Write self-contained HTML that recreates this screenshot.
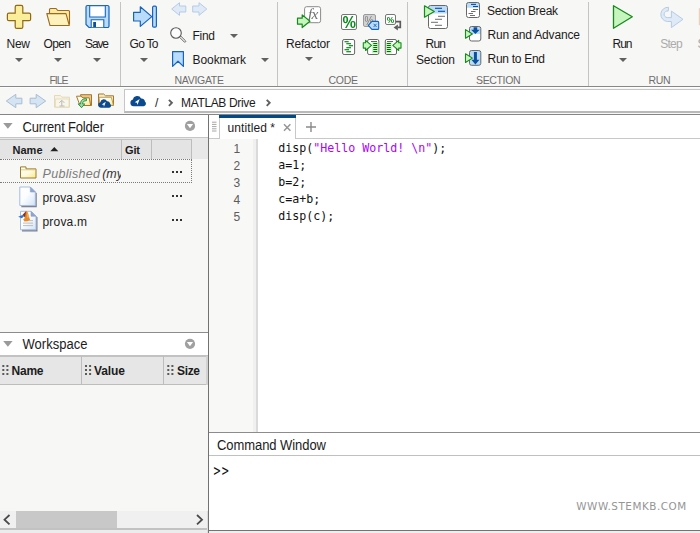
<!DOCTYPE html>
<html><head><meta charset="utf-8"><title>MATLAB</title>
<style>
html,body{margin:0;padding:0}
body{width:700px;height:533px;overflow:hidden;background:#fff;position:relative;font-family:"Liberation Sans",sans-serif}
.t{position:absolute;white-space:pre;}
svg{overflow:visible}
</style></head><body>
<div style="position:absolute;left:0px;top:0px;width:700px;height:86px;background:#f7f7f5;"></div>
<div style="position:absolute;left:0px;top:86px;width:700px;height:1px;background:#888888;"></div>
<div style="position:absolute;left:0px;top:87px;width:700px;height:27px;background:#f7f7f5;"></div>
<div style="position:absolute;left:0px;top:87px;width:700px;height:1px;background:#fdfdfd;"></div>
<div style="position:absolute;left:120px;top:2px;width:1px;height:84px;background:#c4c4c4;"></div>
<div style="position:absolute;left:277px;top:2px;width:1px;height:84px;background:#c4c4c4;"></div>
<div style="position:absolute;left:407px;top:2px;width:1px;height:84px;background:#c4c4c4;"></div>
<div style="position:absolute;left:588px;top:2px;width:1px;height:84px;background:#c4c4c4;"></div>
<div style="position:absolute;left:124px;top:89px;width:580px;height:24px;background:#fff;border:1px solid #c6c6c6;border-bottom:2px solid #b9b9b9;box-sizing:border-box;"></div>
<div style="position:absolute;left:0px;top:114px;width:700px;height:1px;background:#868686;"></div>
<span class="t" style="left:6.50px;top:35.64px;font:normal 12.00px/17px 'Liberation Sans',sans-serif;letter-spacing:-0.253px;color:#1c1c1c;">New</span>
<span class="t" style="left:43.50px;top:35.64px;font:normal 12.00px/17px 'Liberation Sans',sans-serif;letter-spacing:-0.619px;color:#1c1c1c;">Open</span>
<span class="t" style="left:85.00px;top:35.64px;font:normal 12.00px/17px 'Liberation Sans',sans-serif;letter-spacing:-1.117px;color:#1c1c1c;">Save</span>
<span class="t" style="left:49.50px;top:72.86px;font:normal 10.50px/15px 'Liberation Sans',sans-serif;letter-spacing:-1.058px;color:#6e6e6e;">FILE</span>
<span class="t" style="left:129.50px;top:35.64px;font:normal 12.00px/17px 'Liberation Sans',sans-serif;letter-spacing:-0.700px;color:#1c1c1c;">Go To</span>
<span class="t" style="left:192.50px;top:27.74px;font:normal 12.00px/17px 'Liberation Sans',sans-serif;letter-spacing:-0.282px;color:#1c1c1c;">Find</span>
<span class="t" style="left:192.50px;top:51.74px;font:normal 12.00px/17px 'Liberation Sans',sans-serif;letter-spacing:-0.074px;color:#1c1c1c;">Bookmark</span>
<span class="t" style="left:174.50px;top:72.86px;font:normal 10.50px/15px 'Liberation Sans',sans-serif;letter-spacing:-0.291px;color:#6e6e6e;">NAVIGATE</span>
<span class="t" style="left:286.00px;top:35.64px;font:normal 12.00px/17px 'Liberation Sans',sans-serif;letter-spacing:-0.193px;color:#1c1c1c;">Refactor</span>
<span class="t" style="left:328.50px;top:72.86px;font:normal 10.50px/15px 'Liberation Sans',sans-serif;letter-spacing:-0.279px;color:#6e6e6e;">CODE</span>
<span class="t" style="left:425.50px;top:35.64px;font:normal 12.00px/17px 'Liberation Sans',sans-serif;letter-spacing:-0.757px;color:#1c1c1c;">Run</span>
<span class="t" style="left:416.00px;top:51.74px;font:normal 12.00px/17px 'Liberation Sans',sans-serif;letter-spacing:-0.171px;color:#1c1c1c;">Section</span>
<span class="t" style="left:487.00px;top:2.74px;font:normal 12.00px/17px 'Liberation Sans',sans-serif;letter-spacing:-0.309px;color:#1c1c1c;">Section Break</span>
<span class="t" style="left:487.50px;top:26.84px;font:normal 12.00px/17px 'Liberation Sans',sans-serif;letter-spacing:-0.160px;color:#1c1c1c;">Run and Advance</span>
<span class="t" style="left:487.50px;top:50.74px;font:normal 12.00px/17px 'Liberation Sans',sans-serif;letter-spacing:-0.282px;color:#1c1c1c;">Run to End</span>
<span class="t" style="left:476.00px;top:72.86px;font:normal 10.50px/15px 'Liberation Sans',sans-serif;letter-spacing:-0.345px;color:#6e6e6e;">SECTION</span>
<span class="t" style="left:612.50px;top:35.64px;font:normal 12.00px/17px 'Liberation Sans',sans-serif;letter-spacing:-1.007px;color:#1c1c1c;">Run</span>
<span class="t" style="left:660.20px;top:35.64px;font:normal 12.00px/17px 'Liberation Sans',sans-serif;letter-spacing:-0.762px;color:#ababab;">Step</span>
<span class="t" style="left:697.50px;top:35.64px;font:normal 12.00px/17px 'Liberation Sans',sans-serif;color:#a6a6a6;">S</span>
<span class="t" style="left:648.50px;top:72.86px;font:normal 10.50px/15px 'Liberation Sans',sans-serif;letter-spacing:-0.374px;color:#6e6e6e;">RUN</span>
<svg style="position:absolute;left:15px;top:58px" width="8" height="4" viewBox="0 0 8 4"><path d="M0 0H8 L4 4 Z" fill="#616161"/></svg>
<svg style="position:absolute;left:54px;top:58px" width="8" height="4" viewBox="0 0 8 4"><path d="M0 0H8 L4 4 Z" fill="#616161"/></svg>
<svg style="position:absolute;left:93px;top:58px" width="8" height="4" viewBox="0 0 8 4"><path d="M0 0H8 L4 4 Z" fill="#616161"/></svg>
<svg style="position:absolute;left:140px;top:58px" width="8" height="4" viewBox="0 0 8 4"><path d="M0 0H8 L4 4 Z" fill="#616161"/></svg>
<svg style="position:absolute;left:230px;top:34px" width="8" height="4" viewBox="0 0 8 4"><path d="M0 0H8 L4 4 Z" fill="#616161"/></svg>
<svg style="position:absolute;left:261px;top:58px" width="8" height="4" viewBox="0 0 8 4"><path d="M0 0H8 L4 4 Z" fill="#616161"/></svg>
<svg style="position:absolute;left:305px;top:57px" width="8" height="4" viewBox="0 0 8 4"><path d="M0 0H8 L4 4 Z" fill="#616161"/></svg>
<svg style="position:absolute;left:619px;top:58px" width="8" height="4" viewBox="0 0 8 4"><path d="M0 0H8 L4 4 Z" fill="#616161"/></svg>
<span class="t" style="left:155.00px;top:94.74px;font:normal 12.00px/17px 'Liberation Sans',sans-serif;color:#1c1c1c;">/</span>
<span class="t" style="left:181.00px;top:94.74px;font:normal 12.00px/17px 'Liberation Sans',sans-serif;letter-spacing:-0.351px;color:#1c1c1c;">MATLAB Drive</span>
<div style="position:absolute;left:0px;top:115px;width:208px;height:418px;background:#f7f7f5;"></div>
<div style="position:absolute;left:0px;top:115px;width:208px;height:22px;background:#fff;"></div>
<div style="position:absolute;left:0px;top:137px;width:208px;height:1px;background:#c6c6c6;"></div>
<div style="position:absolute;left:0px;top:138px;width:208px;height:21px;background:#e8e8e8;"></div>
<div style="position:absolute;left:0px;top:139px;width:192px;height:20px;background:#e4e4e4;border-top:1px solid #c2c2c2;box-sizing:border-box;"></div>
<span class="t" style="left:22.50px;top:118.90px;font:normal 13.00px/18px 'Liberation Sans',sans-serif;letter-spacing:-0.178px;color:#1c1c1c;transform:scaleY(1.07);transform-origin:0 13.50px;">Current Folder</span>
<span class="t" style="left:12.50px;top:143.09px;font:bold 11.00px/15px 'Liberation Sans',sans-serif;letter-spacing:0.013px;color:#1c1c1c;">Name</span>
<span class="t" style="left:125.00px;top:143.09px;font:bold 11.00px/15px 'Liberation Sans',sans-serif;letter-spacing:-0.138px;color:#1c1c1c;">Git</span>
<div style="position:absolute;left:121px;top:139px;width:1px;height:20px;background:#bdbdbd;"></div>
<div style="position:absolute;left:151px;top:139px;width:1px;height:20px;background:#bdbdbd;"></div>
<div style="position:absolute;left:191px;top:139px;width:1px;height:20px;background:#bdbdbd;"></div>
<div style="position:absolute;left:0px;top:159px;width:192px;height:1px;background:transparent;border-top:1px dotted #7a7a7a;"></div>
<div style="position:absolute;left:0px;top:182px;width:192px;height:1px;background:transparent;border-top:1px dotted #7a7a7a;"></div>
<div style="position:absolute;left:191px;top:159px;width:1px;height:24px;background:transparent;border-left:1px dotted #7a7a7a;"></div>
<span class="t" style="left:42.50px;top:164.67px;font:italic 12.50px/18px 'Liberation Sans',sans-serif;letter-spacing:0.325px;color:#7a7a7a;">Published</span>
<span class="t" style="left:102.20px;top:164.67px;font:italic 12.50px/18px 'Liberation Sans',sans-serif;color:#333;width:19px;overflow:hidden;">(my</span>
<span class="t" style="left:42.50px;top:189.64px;font:normal 12.00px/17px 'Liberation Sans',sans-serif;letter-spacing:0.122px;color:#1c1c1c;">prova.asv</span>
<span class="t" style="left:42.50px;top:213.84px;font:normal 12.00px/17px 'Liberation Sans',sans-serif;letter-spacing:0.192px;color:#1c1c1c;">prova.m</span>
<div style="position:absolute;left:172px;top:171px;width:2px;height:2px;background:#333;"></div>
<div style="position:absolute;left:176px;top:171px;width:2px;height:2px;background:#333;"></div>
<div style="position:absolute;left:180px;top:171px;width:2px;height:2px;background:#333;"></div>
<div style="position:absolute;left:172px;top:195px;width:2px;height:2px;background:#333;"></div>
<div style="position:absolute;left:176px;top:195px;width:2px;height:2px;background:#333;"></div>
<div style="position:absolute;left:180px;top:195px;width:2px;height:2px;background:#333;"></div>
<div style="position:absolute;left:172px;top:219px;width:2px;height:2px;background:#333;"></div>
<div style="position:absolute;left:176px;top:219px;width:2px;height:2px;background:#333;"></div>
<div style="position:absolute;left:180px;top:219px;width:2px;height:2px;background:#333;"></div>
<div style="position:absolute;left:0px;top:332px;width:208px;height:1px;background:#8c8c8c;"></div>
<div style="position:absolute;left:0px;top:333px;width:208px;height:22px;background:#fff;"></div>
<div style="position:absolute;left:0px;top:355px;width:208px;height:2px;background:#c2c2c2;"></div>
<div style="position:absolute;left:0px;top:357px;width:208px;height:27px;background:#e6e6e6;"></div>
<div style="position:absolute;left:206px;top:356px;width:2px;height:29px;background:#d2d2d2;"></div>
<div style="position:absolute;left:0px;top:384px;width:206px;height:1px;background:#bdbdbd;"></div>
<span class="t" style="left:22.50px;top:336.10px;font:normal 13.00px/18px 'Liberation Sans',sans-serif;letter-spacing:0.027px;color:#1c1c1c;transform:scaleY(1.07);transform-origin:0 13.50px;">Workspace</span>
<span class="t" style="left:11.50px;top:362.64px;font:bold 12.00px/17px 'Liberation Sans',sans-serif;letter-spacing:-0.228px;color:#1c1c1c;">Name</span>
<span class="t" style="left:94.00px;top:362.64px;font:bold 12.00px/17px 'Liberation Sans',sans-serif;letter-spacing:-0.089px;color:#1c1c1c;">Value</span>
<span class="t" style="left:177.00px;top:362.64px;font:bold 12.00px/17px 'Liberation Sans',sans-serif;letter-spacing:-0.337px;color:#1c1c1c;">Size</span>
<div style="position:absolute;left:81px;top:356px;width:1px;height:28px;background:#bdbdbd;"></div>
<div style="position:absolute;left:163px;top:356px;width:1px;height:28px;background:#bdbdbd;"></div>
<div style="position:absolute;left:0px;top:511px;width:208px;height:17px;background:#f0f0f0;"></div>
<div style="position:absolute;left:16px;top:511px;width:101px;height:17px;background:#c8c8c8;"></div>
<div style="position:absolute;left:0px;top:528px;width:208px;height:1.5px;background:#c2c2c2;"></div>
<div style="position:absolute;left:0px;top:529.5px;width:208px;height:3.5px;background:#ececec;"></div>
<div style="position:absolute;left:209px;top:530px;width:491px;height:1px;background:#737373;"></div>
<div style="position:absolute;left:209px;top:531px;width:491px;height:2px;background:#eeeeee;"></div>
<div style="position:absolute;left:207px;top:511px;width:1px;height:22px;background:#dcdcdc;"></div>
<div style="position:absolute;left:208px;top:115px;width:1px;height:418px;background:#727272;"></div>
<div style="position:absolute;left:209px;top:115px;width:491px;height:23px;background:#fff;"></div>
<div style="position:absolute;left:209px;top:138px;width:491px;height:1px;background:#c8c8c8;"></div>
<div style="position:absolute;left:219px;top:115px;width:77px;height:24px;background:#fff;border-left:1px solid #c8c8c8;border-right:1px solid #c8c8c8;box-sizing:border-box;"></div>
<div style="position:absolute;left:219px;top:115px;width:76.5px;height:3px;background:#004b87;"></div>
<span class="t" style="left:227.50px;top:119.64px;font:normal 12.00px/17px 'Liberation Sans',sans-serif;letter-spacing:0.089px;color:#1c1c1c;">untitled *</span>
<div style="position:absolute;left:209px;top:139px;width:44px;height:293px;background:#f8f8f6;"></div>
<div style="position:absolute;left:253px;top:139px;width:3px;height:293px;background:#f0f0f0;"></div>
<div style="position:absolute;left:256px;top:139px;width:2px;height:293px;background:#dadada;"></div>
<span class="t" style="left:233.60px;top:140.64px;font:normal 12.00px/17px 'Liberation Sans',sans-serif;color:#5c5c5c;">1</span>
<span class="t" style="left:233.60px;top:157.74px;font:normal 12.00px/17px 'Liberation Sans',sans-serif;color:#5c5c5c;">2</span>
<span class="t" style="left:233.60px;top:174.84px;font:normal 12.00px/17px 'Liberation Sans',sans-serif;color:#5c5c5c;">3</span>
<span class="t" style="left:233.60px;top:191.94px;font:normal 12.00px/17px 'Liberation Sans',sans-serif;color:#5c5c5c;">4</span>
<span class="t" style="left:233.60px;top:209.04px;font:normal 12.00px/17px 'Liberation Sans',sans-serif;color:#5c5c5c;">5</span>
<span class="t" style="left:278.30px;top:139.68px;font:normal 11.63px/16px 'DejaVu Sans Mono','Liberation Mono',monospace;color:#111;">disp(</span>
<span class="t" style="left:313.30px;top:139.68px;font:normal 11.63px/16px 'DejaVu Sans Mono','Liberation Mono',monospace;color:#aa04f9;">"Hello World! \n"</span>
<span class="t" style="left:432.30px;top:139.68px;font:normal 11.63px/16px 'DejaVu Sans Mono','Liberation Mono',monospace;color:#111;">);</span>
<span class="t" style="left:278.30px;top:156.78px;font:normal 11.63px/16px 'DejaVu Sans Mono','Liberation Mono',monospace;color:#111;">a=1;</span>
<span class="t" style="left:278.30px;top:173.88px;font:normal 11.63px/16px 'DejaVu Sans Mono','Liberation Mono',monospace;color:#111;">b=2;</span>
<span class="t" style="left:278.30px;top:190.98px;font:normal 11.63px/16px 'DejaVu Sans Mono','Liberation Mono',monospace;color:#111;">c=a+b;</span>
<span class="t" style="left:278.30px;top:208.08px;font:normal 11.63px/16px 'DejaVu Sans Mono','Liberation Mono',monospace;color:#111;">disp(c);</span>
<div style="position:absolute;left:209px;top:432px;width:491px;height:1px;background:#8c8c8c;"></div>
<div style="position:absolute;left:209px;top:455px;width:491px;height:1px;background:#c0c0c0;"></div>
<span class="t" style="left:217.00px;top:436.90px;font:normal 13.00px/18px 'Liberation Sans',sans-serif;letter-spacing:-0.063px;color:#1c1c1c;transform:scaleY(1.07);transform-origin:0 13.50px;">Command Window</span>
<span class="t" style="left:213.60px;top:462.98px;font:normal 11.63px/16px 'DejaVu Sans Mono','Liberation Mono',monospace;color:#111;letter-spacing:1.1px;transform:scaleY(1.38);transform-origin:50% 56%;">&gt;&gt;</span>
<span class="t" style="left:576.30px;top:499.20px;font:normal 10.40px/15px 'DejaVu Sans','Liberation Sans',sans-serif;letter-spacing:0.527px;color:#959595;">WWW.STEMKB.COM</span>
<svg style="position:absolute;left:0;top:0;will-change:transform" width="700" height="533" viewBox="0 0 700 533"><path d="M16.700 5.400h4.600a1.500 1.500 0 0 1 1.500 1.500v6.200h6.300a1.500 1.500 0 0 1 1.500 1.500v4.600a1.500 1.500 0 0 1 -1.500 1.500h-6.300v6.200a1.500 1.500 0 0 1 -1.500 1.500h-4.600a1.500 1.500 0 0 1 -1.500 -1.500v-6.200h-6.300a1.500 1.500 0 0 1 -1.500 -1.500v-4.600a1.500 1.500 0 0 1 1.500 -1.500h6.300v-6.200a1.500 1.500 0 0 1 1.500 -1.500z" fill="#fbee9a" stroke="#8f6a12" stroke-width="1.2" /><path d="M49.5 13.5v-4a1 1 0 0 1 1 -1h5.5l1.8 2h10.700a1 1 0 0 1 1 1v13" fill="#fbeaa0" stroke="#9a6a20" stroke-width="1.1" /><path d="M46.8 13.6h19.200l3.300 11.9h-19.300z" fill="#fdf2bb" stroke="#9a6a20" stroke-width="1.1" stroke-linejoin="round"/><path d="M87.5 5.5h20a1.5 1.5 0 0 1 1.5 1.5v19a1.5 1.500 0 0 1 -1.500 1.500h-18.500l-3 -3v-17.500a1.500 1.500 0 0 1 1.500 -1.500z" fill="#b9dcfb" stroke="#1763bf" stroke-width="1.2" /><path d="M89.7 5.8h15.600v11.200h-15.600z" fill="#fff" stroke="#1763bf" stroke-width="1.1" /><path d="M91.200 27.200v-7.400h12.600v7.400" fill="#fff" stroke="#1763bf" stroke-width="1.1" /><rect x="93.2" y="22" width="2.8" height="5.2" rx="0" fill="#0b4f9e" stroke="none" stroke-width="1" /><path d="M133.6 12.300h6.700v-5.500l11.500 9.800l-11.500 9.800v-5.400h-6.700z" fill="#b9dcfb" stroke="#1763bf" stroke-width="1.2" stroke-linejoin="round"/><rect x="152.6" y="6.2" width="3.8" height="21" rx="1.2" fill="#b9dcfb" stroke="#1763bf" stroke-width="1.2" /><path d="M171.700 9l7.800 -6.300v3.300h6.300v6h-6.300v3.400z" fill="#dfeaf6" stroke="#b4cbe6" stroke-width="1" /><path d="M206.800 9l-7.800 -6.300v3.300h-6.300v6h6.300v3.400z" fill="#dfeaf6" stroke="#b4cbe6" stroke-width="1" /><circle cx="176" cy="33" r="5.300" fill="#fcfcfc" stroke="#5a5a5a" stroke-width="1.1"/><path d="M179.600 37.400l1.300 -1.300l4.600 4.600a0.900 0.900 0 0 1 -1.300 1.300z" fill="#e6e6e6" stroke="#6a6a6a" stroke-width="0.9" /><path d="M172.600 51.600h10.800v14.800l-5.400 -5.200l-5.400 5.200z" fill="#b9dcfb" stroke="#1763bf" stroke-width="1.2" stroke-linejoin="round"/><rect x="304.6" y="6.7" width="16" height="16" rx="2" fill="#fff" stroke="#8a8a8a" stroke-width="1" /><text x="308" y="18.600" font-family="'Liberation Serif',serif" font-style="italic" font-size="15.500" fill="#707070" letter-spacing="-0.8">fx</text><path d="M297.500 18.200h4.700v-3.300l7.800 6.300l-7.800 6.300v-3.300h-4.700z" fill="#c6f6bd" stroke="#168a1c" stroke-width="1.2" stroke-linejoin="round"/><rect x="341.5" y="14.5" width="15" height="15" rx="1.5" fill="#fff" stroke="#777" stroke-width="1" /><text transform="translate(342.500 28.300) scale(0.89 1)" font-family="'Liberation Sans',sans-serif" font-weight="bold" font-size="17" fill="#0d8a1e">%</text><rect x="363.5" y="14.5" width="12" height="12" rx="1.5" fill="#d2d2d2" stroke="#9a9a9a" stroke-width="1" /><text transform="translate(364.600 24.800) scale(0.86 1)" font-family="'Liberation Sans',sans-serif" font-size="12" fill="#808080">%</text><path d="M368.300 25.400l3.600 -4h5.800a1 1 0 0 1 1 1v6a1 1 0 0 1 -1 1h-5.800z" fill="#b9dcfb" stroke="#1763bf" stroke-width="1.1" stroke-linejoin="round"/><path d="M373.600 23.800l3 3.200M376.600 23.800l-3 3.200" fill="none" stroke="#1763bf" stroke-width="0.9" /><rect x="385.5" y="14.5" width="10" height="10" rx="1.5" fill="#fff" stroke="#777" stroke-width="1" /><text transform="translate(386.700 23.100) scale(0.87 1)" font-family="'Liberation Sans',sans-serif" font-weight="bold" font-size="9.600" fill="#0d8a1e">%</text><path d="M396 21.600h4.300v5.700h-2.500" fill="none" stroke="#5c5c5c" stroke-width="1.7" /><path d="M393.600 27.500l4.300 -3v6z" fill="#5f5f5f" stroke="none" stroke-width="1" /><rect x="342.6" y="39.5" width="12" height="15" rx="1.5" fill="#fff" stroke="#666" stroke-width="1" /><path d="M344.5 41.7L348.7 41.7" stroke="#0d8a1e" stroke-width="1.2" fill="none"/><path d="M346.3 43.7L351 43.7" stroke="#0d8a1e" stroke-width="1.2" fill="none"/><path d="M348.8 45.7L353 45.7" stroke="#0d8a1e" stroke-width="1.2" fill="none"/><path d="M346.3 47.7L351 47.7" stroke="#0d8a1e" stroke-width="1.2" fill="none"/><path d="M344.5 49.7L349 49.7" stroke="#0d8a1e" stroke-width="1.2" fill="none"/><path d="M346.3 51.7L351 51.7" stroke="#0d8a1e" stroke-width="1.2" fill="none"/><rect x="367.6" y="39.5" width="11.2" height="15" rx="1.5" fill="#fff" stroke="#666" stroke-width="1" /><rect x="372" y="42.3" width="6.2" height="11" rx="0" fill="#c6f7be" stroke="none" stroke-width="1" /><path d="M371 41.5L377 41.5" stroke="#666" stroke-width="1" fill="none"/><path d="M373.3 43.5L377.2 43.5" stroke="#0a6410" stroke-width="1" fill="none"/><path d="M373.3 45.5L377.2 45.5" stroke="#0a6410" stroke-width="1" fill="none"/><path d="M373.3 47.5L377.2 47.5" stroke="#0a6410" stroke-width="1" fill="none"/><path d="M373.3 49.5L377.2 49.5" stroke="#0a6410" stroke-width="1" fill="none"/><path d="M373.3 51.5L377.2 51.5" stroke="#0a6410" stroke-width="1" fill="none"/><path d="M363.300 42.700h2.300v-2.400l5.900 5.100l-5.900 5.100v-2.400h-2.300z" fill="#c6f6bd" stroke="#168a1c" stroke-width="1.1" stroke-linejoin="round"/><rect x="385.3" y="39.5" width="11.2" height="15" rx="1.5" fill="#fff" stroke="#666" stroke-width="1" /><rect x="386" y="42.3" width="5.8" height="11" rx="0" fill="#c6f7be" stroke="none" stroke-width="1" /><path d="M387 41.5L393 41.5" stroke="#666" stroke-width="1" fill="none"/><path d="M386.8 43.5L390.8 43.5" stroke="#0a6410" stroke-width="1" fill="none"/><path d="M386.8 45.5L390.8 45.5" stroke="#0a6410" stroke-width="1" fill="none"/><path d="M386.8 47.5L390.8 47.5" stroke="#0a6410" stroke-width="1" fill="none"/><path d="M386.8 49.5L390.8 49.5" stroke="#0a6410" stroke-width="1" fill="none"/><path d="M386.8 51.5L390.8 51.5" stroke="#0a6410" stroke-width="1" fill="none"/><path d="M401 42.700h-2.300v-2.400l-5.900 5.100l5.900 5.100v-2.400h2.300z" fill="#c6f6bd" stroke="#168a1c" stroke-width="1.1" stroke-linejoin="round"/><rect x="428.5" y="5.5" width="19" height="23" rx="2" fill="#fff" stroke="none" stroke-width="0" /><path d="M428.5 7.5a2 2 0 0 1 2 -2h15a2 2 0 0 1 2 2v6h-19z" fill="#b9dcfb"/><path d="M435 8.3L442 8.3" stroke="#0b4f9e" stroke-width="1.1" fill="none"/><path d="M438 11.3L445 11.3" stroke="#0b4f9e" stroke-width="1.1" fill="none"/><path d="M438 16.3L445 16.3" stroke="#707070" stroke-width="1" fill="none"/><path d="M435 19.3L442 19.3" stroke="#707070" stroke-width="1" fill="none"/><path d="M431 22.3L438 22.3" stroke="#707070" stroke-width="1" fill="none"/><path d="M435 25.3L442 25.3" stroke="#707070" stroke-width="1" fill="none"/><rect x="428.5" y="5.5" width="19" height="23" rx="2" fill="none" stroke="#686868" stroke-width="1" /><path d="M424.500 5.800v11.400l9.800 -5.700z" fill="#c6f6bd" stroke="#168a1c" stroke-width="1.2" stroke-linejoin="round"/><rect x="466.5" y="2.5" width="13" height="15" rx="2" fill="#fff" stroke="none" stroke-width="0" /><path d="M466.5 4.5a2 2 0 0 1 2 -2h9a2 2 0 0 1 2 2v3.3h-13z" fill="#b9dcfb"/><path d="M471 4.4L476 4.4" stroke="#0b4f9e" stroke-width="1.1" fill="none"/><path d="M473 6.5L478 6.5" stroke="#0b4f9e" stroke-width="1.1" fill="none"/><path d="M473 9.5L478 9.5" stroke="#707070" stroke-width="1" fill="none"/><path d="M471 11.5L475.5 11.5" stroke="#707070" stroke-width="1" fill="none"/><path d="M468.5 13.5L473 13.5" stroke="#707070" stroke-width="1" fill="none"/><path d="M470 15.5L475 15.5" stroke="#707070" stroke-width="1" fill="none"/><rect x="466.5" y="2.5" width="13" height="15" rx="2" fill="none" stroke="#686868" stroke-width="1" /><rect x="469.5" y="26.5" width="11.3" height="14.5" rx="2" fill="#fff" stroke="none" stroke-width="0" /><path d="M469.5 28.5a2 2 0 0 1 2 -2h7.3a2 2 0 0 1 2 2v5.5h-11.3z" fill="#b9dcfb"/><rect x="469.5" y="26.5" width="11.3" height="14.5" rx="2" fill="none" stroke="#686868" stroke-width="1" /><path d="M473.600 27.200h3.600v2.600h2.500l-4.300 4.100l-4.300 -4.100h2.500z" fill="#0b4f9e" stroke="none" stroke-width="1" /><path d="M465.500 29.600v8.700l6.900 -4.350z" fill="#c6f6bd" stroke="#168a1c" stroke-width="1.1" stroke-linejoin="round"/><rect x="469.5" y="50.5" width="11.3" height="14.8" rx="2" fill="#b9dcfb" stroke="#686868" stroke-width="1" /><path d="M473.900 52h3v7.800h2.500l-4 4.700l-4 -4.700h2.500z" fill="#0b4f9e" stroke="none" stroke-width="1" /><path d="M465.500 53.800v8.700l6.900 -4.350z" fill="#c6f6bd" stroke="#168a1c" stroke-width="1.1" stroke-linejoin="round"/><path d="M613.500 5.700v22.600l18.800 -11.500z" fill="#c6f6bd" stroke="#168a1c" stroke-width="1.3" stroke-linejoin="round"/><path d="M671.400 11.100L683 19.300L671.400 27.600V21.500H667.300A7.100 7.100 0 1 1 668.600 7.300L668.200 11.100A3.300 3.300 0 1 0 667.300 17.600H671.400z" fill="#dfeaf6" stroke="#b4cbe6" stroke-width="1" stroke-linejoin="round"/><rect x="698.8" y="8.2" width="4" height="17" rx="0" fill="#ecd0ba" stroke="none" stroke-width="1" /><path d="M6.300 101l9.500 -6.700v3.900h6.100v5.600h-6.100v3.900z" fill="#d5e4f3" stroke="#a9bcd3" stroke-width="1" stroke-linejoin="round"/><path d="M45.700 101l-9.500 -6.700v3.900h-6.100v5.600h6.100v3.900z" fill="#d5e4f3" stroke="#a9bcd3" stroke-width="1" stroke-linejoin="round"/><path d="M54.500 95.500h6l1.500 1.700h7.500v10h-15z" fill="#f6f2e2" stroke="#e4d9b8" stroke-width="1" /><path d="M55.500 99h13.500v8h-13.500z" fill="#f8f5ea" stroke="#e4d9b8" stroke-width="0.8" /><path d="M61.800 106v-5.200M59.300 102.800l2.500 -2.500l2.500 2.500M59.500 106h5" fill="none" stroke="#b8b8b8" stroke-width="1" /><path d="M80.500 94.700h11v10.800h-9z" fill="#e6c98a" stroke="#a8762a" stroke-width="1" /><path d="M76.500 96.200h4.300l2.200 1.600h6.200l1.500 7.700h-10.700z" fill="url(#gf)" stroke="#a8762a" stroke-width="1" stroke-linejoin="round"/><path d="M86.500 98.700c-4 -0.300 -6 1.800 -6 5.200h-2.300l3.300 3.800l3.300 -3.800h-2.200c0 -2 1.300 -3.300 3.900 -3.200z" fill="#9ed8a0" stroke="#1e8a3a" stroke-width="0.9" stroke-linejoin="round"/><path d="M98.500 94h5.200l1.800 1.800h8v9.500h-15z" fill="#f6ecc4" stroke="#a8762a" stroke-width="1" /><path d="M99 97.300h12.300l2.200 8h-13.500z" fill="url(#gf)" stroke="#b08a40" stroke-width="0.8" /><g transform="translate(97.8 99.5) scale(0.83)"><path d="M3.600 10a3.400 3.400 0 0 1 -0.600 -6.700a4.300 4.300 0 0 1 8.100 -1.100a3.200 3.200 0 0 1 3.800 3.100a2.600 2.600 0 0 1 -1.200 4.700z" fill="#0b4a8e"/><path d="M9.700 2.600l-5 3.300l2.200 0.500l0.500 2.200z" fill="#fff"/></g><g transform="translate(130 96.3) scale(1)"><path d="M3.600 10a3.400 3.400 0 0 1 -0.600 -6.700a4.300 4.300 0 0 1 8.100 -1.100a3.200 3.200 0 0 1 3.800 3.100a2.600 2.600 0 0 1 -1.200 4.700z" fill="#0b4a8e"/><path d="M9.700 2.600l-5 3.300l2.200 0.500l0.500 2.200z" fill="#fff"/></g><defs><linearGradient id="gf" x1="0" y1="0" x2="1" y2="1"><stop offset="0" stop-color="#fffef6"/><stop offset="0.5" stop-color="#fffbe0"/><stop offset="1" stop-color="#f7e98c"/></linearGradient><linearGradient id="gp" x1="0" y1="0" x2="1" y2="1"><stop offset="0" stop-color="#ffffff"/><stop offset="0.45" stop-color="#fbfdff"/><stop offset="1" stop-color="#d3e2f4"/></linearGradient></defs><path d="M3.200 123h9.400l-4.700 5.800z" fill="#9a9a9a" stroke="none" stroke-width="1" /><path d="M3.200 341h9.400l-4.700 5.800z" fill="#9a9a9a" stroke="none" stroke-width="1" /><circle cx="190" cy="125.9" r="5.100" fill="#a0a0a0"/><path d="M186.900 124.1h6.200l-3.100 4.200z" fill="#fff" stroke="none" stroke-width="1" /><circle cx="190" cy="343.8" r="5.100" fill="#a0a0a0"/><path d="M186.900 342h6.200l-3.100 4.200z" fill="#fff" stroke="none" stroke-width="1" /><path d="M50.300 151.300h8l-4 -4.300z" fill="#222" stroke="none" stroke-width="1" /><path d="M20.500 178v-11.100h5.500v2h10v9.100z" fill="url(#gf)" stroke="#9c7c28" stroke-width="1" /><path d="M21 169.8L35.5 169.8" stroke="#d8c070" stroke-width="0.8" fill="none"/><path d="M21.3 188.3h10.500l5 5v14h-15.500z" fill="#6b6f84" stroke="none" stroke-width="0" opacity="0.85"/><path d="M19.8 187h10.500l5 5v13.500h-15.500z" fill="url(#gp)" stroke="#a6bce2" stroke-width="1" stroke-linejoin="round"/><path d="M30.3 187v5h5z" fill="#8fa3cf" stroke="#8fa3cf" stroke-width="0.6" stroke-linejoin="round"/><path d="M22 212.6h10.500l5 5v14h-15.500z" fill="#6b6f84" stroke="none" stroke-width="0" opacity="0.85"/><path d="M20.5 211.3h10.500l5 5v13.500h-15.500z" fill="url(#gp)" stroke="#a6bce2" stroke-width="1" stroke-linejoin="round"/><path d="M31 211.3v5h5z" fill="#8fa3cf" stroke="#8fa3cf" stroke-width="0.6" stroke-linejoin="round"/><path d="M26.5 220.6L33 220.6" stroke="#bdbdbd" stroke-width="1" fill="none"/><path d="M23 223.1L33 223.1" stroke="#bdbdbd" stroke-width="1" fill="none"/><path d="M23 225.6L33 225.6" stroke="#bdbdbd" stroke-width="1" fill="none"/><path d="M18.200 216.800l4.200 -1.900l1.600 1.300l-2.200 2z" fill="#2f74d0" stroke="none" stroke-width="1" /><path d="M22.400 214.900l3.700 -3.800l0.800 3.500l-1.200 4.500l-1.700 -2.900z" fill="#8a3220" stroke="none" stroke-width="1" /><path d="M26.100 211.100c1.100 -0.200 1.900 1.700 2.600 4.300c0.500 1.800 0.900 3.300 1.500 4.300l-2.700 1.600l-3 0.300l-1.300 -2.200l1.700 -1.300z" fill="#e58a2c" stroke="none" stroke-width="1" /><path d="M27.300 212.700c0.700 1.200 1.100 2.800 1.500 4.200l-1.300 1z" fill="#f6c05a" stroke="none" stroke-width="1" /><rect x="2.3" y="365" width="2" height="2" rx="0" fill="#5a5a5a" stroke="none" stroke-width="1" /><rect x="6.4" y="365" width="2" height="2" rx="0" fill="#5a5a5a" stroke="none" stroke-width="1" /><rect x="2.3" y="369" width="2" height="2" rx="0" fill="#5a5a5a" stroke="none" stroke-width="1" /><rect x="6.4" y="369" width="2" height="2" rx="0" fill="#5a5a5a" stroke="none" stroke-width="1" /><rect x="2.3" y="373" width="2" height="2" rx="0" fill="#5a5a5a" stroke="none" stroke-width="1" /><rect x="6.4" y="373" width="2" height="2" rx="0" fill="#5a5a5a" stroke="none" stroke-width="1" /><rect x="85" y="365" width="2" height="2" rx="0" fill="#5a5a5a" stroke="none" stroke-width="1" /><rect x="89.1" y="365" width="2" height="2" rx="0" fill="#5a5a5a" stroke="none" stroke-width="1" /><rect x="85" y="369" width="2" height="2" rx="0" fill="#5a5a5a" stroke="none" stroke-width="1" /><rect x="89.1" y="369" width="2" height="2" rx="0" fill="#5a5a5a" stroke="none" stroke-width="1" /><rect x="85" y="373" width="2" height="2" rx="0" fill="#5a5a5a" stroke="none" stroke-width="1" /><rect x="89.1" y="373" width="2" height="2" rx="0" fill="#5a5a5a" stroke="none" stroke-width="1" /><rect x="167.3" y="365" width="2" height="2" rx="0" fill="#5a5a5a" stroke="none" stroke-width="1" /><rect x="171.4" y="365" width="2" height="2" rx="0" fill="#5a5a5a" stroke="none" stroke-width="1" /><rect x="167.3" y="369" width="2" height="2" rx="0" fill="#5a5a5a" stroke="none" stroke-width="1" /><rect x="171.4" y="369" width="2" height="2" rx="0" fill="#5a5a5a" stroke="none" stroke-width="1" /><rect x="167.3" y="373" width="2" height="2" rx="0" fill="#5a5a5a" stroke="none" stroke-width="1" /><rect x="171.4" y="373" width="2" height="2" rx="0" fill="#5a5a5a" stroke="none" stroke-width="1" /><path d="M9.500 515l-5 4.700l5 4.700" fill="none" stroke="#4a4a4a" stroke-width="1.8" /><path d="M197 515l5 4.700l-5 4.700" fill="none" stroke="#4a4a4a" stroke-width="1.8" /><path d="M212 122.2L216.5 122.2" stroke="#a6a6a6" stroke-width="1" fill="none"/><path d="M212 124.4L216.5 124.4" stroke="#a6a6a6" stroke-width="1" fill="none"/><path d="M212 126.6L216.5 126.6" stroke="#a6a6a6" stroke-width="1" fill="none"/><path d="M212 128.8L216.5 128.8" stroke="#a6a6a6" stroke-width="1" fill="none"/><path d="M212 131L216.5 131" stroke="#a6a6a6" stroke-width="1" fill="none"/><path d="M284 124.300l6.400 6.400M290.400 124.300l-6.400 6.400" fill="none" stroke="#969696" stroke-width="1.5" /><path d="M306 127h10M311 122v10" fill="none" stroke="#8a8a8a" stroke-width="1.4" /><path d="M168.900 99.800l3 3l-3 3" fill="none" stroke="#606060" stroke-width="1.9" /><path d="M266.700 99.800l3 3l-3 3" fill="none" stroke="#606060" stroke-width="1.9" /></svg>
</body></html>
